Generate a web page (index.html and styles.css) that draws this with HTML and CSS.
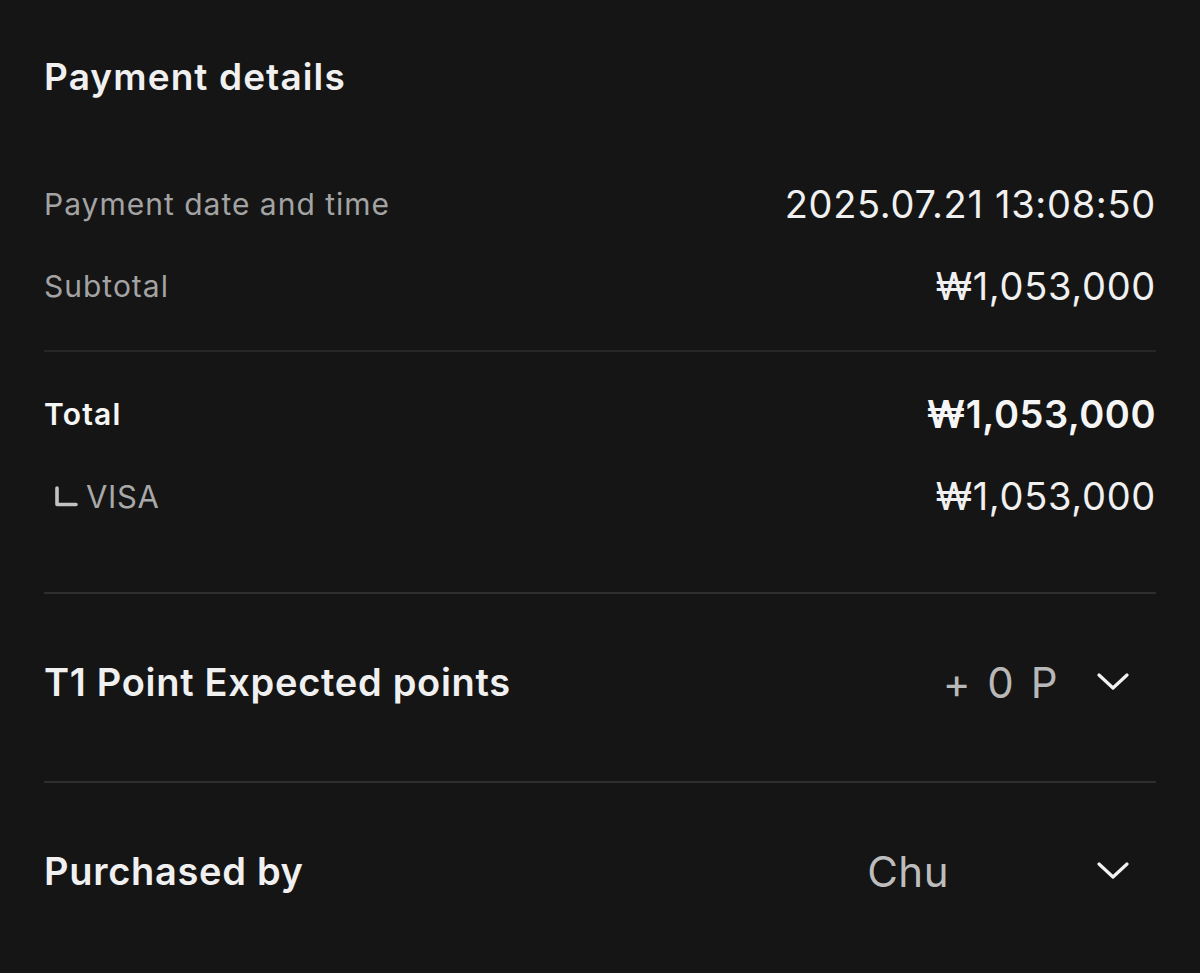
FILE: index.html
```html
<!DOCTYPE html>
<html lang="en">
<head>
<meta charset="utf-8">
<title>Payment details</title>
<link rel="stylesheet" href="styles.css">
</head>
<body>
<main class="page">
  <h1 class="title">Payment details</h1>

  <section class="details">
    <div class="row">
      <span class="label">Payment date and time</span>
      <span class="value">2025.07.21 13:08:50</span>
    </div>
    <div class="row">
      <span class="label">Subtotal</span>
      <span class="value">₩1,053,000</span>
    </div>
  </section>

  <hr class="divider thin">

  <section class="totals">
    <div class="row">
      <span class="label strong">Total</span>
      <span class="value strong big">₩1,053,000</span>
    </div>
    <div class="row">
      <span class="label sub">
        <svg class="branch" width="24" height="22" viewBox="0 0 24 22"><path d="M3 2V18.5H22" fill="none" stroke="#c2c2c2" stroke-width="3.6" stroke-linejoin="round" stroke-linecap="round"/></svg>
        VISA
      </span>
      <span class="value">₩1,053,000</span>
    </div>
  </section>

  <hr class="divider">

  <section class="expand">
    <span class="expand-title">T1 Point Expected points</span>
    <div class="expand-right">
      <span class="points">+ 0 P</span>
      <svg class="chev" width="32" height="20" viewBox="0 0 32 20"><path d="M2 3L16 16L30 3" fill="none" stroke="#f2f2f2" stroke-width="3.2" stroke-linecap="round" stroke-linejoin="round"/></svg>
    </div>
  </section>

  <hr class="divider">

  <section class="expand">
    <span class="expand-title">Purchased by</span>
    <div class="expand-right">
      <span class="buyer">Chu</span>
      <svg class="chev" width="32" height="20" viewBox="0 0 32 20"><path d="M2 3L16 16L30 3" fill="none" stroke="#f2f2f2" stroke-width="3.2" stroke-linecap="round" stroke-linejoin="round"/></svg>
    </div>
  </section>
</main>
</body>
</html>
```

FILE: styles.css
```css
html, body {
  margin: 0;
  padding: 0;
  background: #151515;
}

body {
  font-family: Inter, "Noto Sans", "Liberation Sans", sans-serif;
  color: #f2f2f2;
  height: 973px;
  overflow: hidden;
}

.page {
  padding: 0 44px;
}

.title {
  margin: 0;
  padding-top: 52px;
  height: 50px;
  line-height: 50px;
  font-size: 37px;
  font-weight: 600;
  letter-spacing: 1.1px;
  color: #f0f0f0;
}

.details {
  margin-top: 61px;
  padding-bottom: 23px;
}

.row {
  height: 82px;
  display: flex;
  align-items: center;
  justify-content: space-between;
}

.label {
  font-size: 30px;
  color: #a3a3a3;
  letter-spacing: 1px;
}

.value {
  font-size: 38px;
  color: #f0f0f0;
  letter-spacing: 0.7px;
}

.strong {
  font-weight: 600;
  color: #f5f5f5;
}

.label.strong {
  letter-spacing: 1.2px;
}

.big {
  font-size: 38px;
  letter-spacing: 0.5px;
}

.label.sub {
  display: flex;
  align-items: center;
  gap: 8px;
  padding-left: 10px;
  font-size: 31px;
  letter-spacing: 0.6px;
  color: #a8a8a8;
}

.branch {
  display: block;
  margin-top: 1px;
}

.divider {
  margin: 0;
  border: 0;
  height: 2px;
  background: #2e2e2e;
}

.divider.thin {
  background: #262626;
}

.totals {
  padding-top: 21px;
  padding-bottom: 55px;
}

.expand {
  display: flex;
  align-items: center;
  justify-content: space-between;
  padding: 48px 0 59px;
  height: 80px;
}

.expand-title {
  font-size: 38px;
  font-weight: 600;
  color: #f0f0f0;
  letter-spacing: 0.7px;
}

.expand-right {
  display: flex;
  align-items: center;
}

.points {
  font-size: 42px;
  color: #b8b8b8;
  letter-spacing: 2.5px;
  margin-right: 37px;
}

.buyer {
  font-size: 42px;
  color: #bdbdbd;
  letter-spacing: 0.5px;
  margin-right: 148px;
}

.chev {
  display: block;
  margin-right: 27px;
}
```
